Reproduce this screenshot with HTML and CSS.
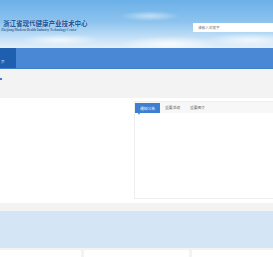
FILE: index.html
```html
<!DOCTYPE html>
<html lang="zh-CN">
<head>
  <meta charset="UTF-8">
  <meta name="viewport" content="width=device-width, initial-scale=1.0">
  <title>浙江省现代健康产业技术中心</title>
  <link rel="stylesheet" href="styles.css">
</head>
<body>
  <header class="header">
    <div class="brand">
      <h1>浙江省现代健康产业技术中心</h1>
      <p>Zhejiang Modern Health Industry Technology Center</p>
    </div>
    <div class="search">
      <input type="text" placeholder="请输入关键字">
    </div>
  </header>

  <nav class="nav">
    <a class="nav-home" href="#">页</a>
  </nav>

  <div class="notice-bar">
    <span class="notice-icon"></span>
  </div>

  <section class="main">
    <div class="main-left"></div>
    <div class="tabs-panel">
      <ul class="tabs">
        <li class="active">通知公告</li>
        <li>重要活动</li>
        <li>重要图文</li>
      </ul>
      <div class="tab-body"></div>
    </div>
  </section>

  <div class="band"></div>

  <div class="cards">
    <div class="card card-a"></div>
    <div class="card card-b"></div>
    <div class="card card-c"></div>
  </div>
</body>
</html>
```

FILE: styles.css
```css
* {
  box-sizing: border-box;
  margin: 0;
  padding: 0;
}

body {
  background: #f3f3f3;
  font-family: "Noto Sans CJK SC", "Noto Sans", sans-serif;
  overflow: hidden;
  width: 273px;
}

.header {
  height: 48px;
  display: flex;
  justify-content: space-between;
  align-items: flex-start;
  background:
    radial-gradient(ellipse 40px 6px at 60px 40px, rgba(255, 255, 255, 0.7), transparent),
    radial-gradient(ellipse 50px 8px at 170px 44px, rgba(255, 255, 255, 0.8), transparent),
    radial-gradient(ellipse 30px 5px at 150px 16px, rgba(255, 255, 255, 0.5), transparent),
    radial-gradient(ellipse 45px 7px at 250px 40px, rgba(255, 255, 255, 0.7), transparent),
    linear-gradient(#6cb0e8 0%, #8cc3ee 45%, #c6e1f6 80%, #e4f0fa 100%);
}

.brand {
  padding: 19px 0 0 3px;
}

.brand h1 {
  font-family: "Noto Sans CJK SC", sans-serif;
  font-size: 6.5px;
  font-weight: 900;
  line-height: 9px;
  color: #1d5aa2;
  text-shadow: 0 0 1px #fff;
}

.brand p {
  font-family: "Liberation Serif", serif;
  font-size: 3.3px;
  font-weight: 700;
  line-height: 5px;
  color: #3b6aa0;
  margin-left: -2px;
}

.search {
  padding-top: 23px;
}

.search input {
  display: block;
  width: 80px;
  height: 9px;
  border: 0;
  background: #fff;
  padding-left: 5px;
  font-size: 3.6px;
  font-family: "Noto Sans CJK SC", sans-serif;
  outline: none;
}

.search input::placeholder {
  color: #777;
}

.nav {
  height: 21px;
  background: #4a88d6;
  border-bottom: 1px solid #3f7cca;
  display: flex;
}

.nav-home {
  width: 16px;
  background: #1f5fb0;
  color: #d8e6f7;
  font-size: 3.5px;
  text-decoration: none;
  display: flex;
  align-items: flex-end;
  padding: 0 0 4px 1px;
}

.notice-bar {
  margin-top: 8px;
  height: 21px;
  background: #f3f3f3;
  padding-top: 1px;
}

.notice-icon {
  display: block;
  width: 2px;
  height: 2px;
  background: #3b7ad0;
}

.main {
  height: 105px;
  background: #fff;
  display: flex;
  padding-top: 3px;
}

.main-left {
  width: 134px;
}

.tabs-panel {
  flex: 1;
  height: 98px;
  border: 1px solid #eee;
  border-right: 0;
  display: flex;
  flex-direction: column;
}

.tabs {
  list-style: none;
  display: flex;
  height: 11px;
  background: #f7f7f7;
  font-size: 3.8px;
  color: #555;
}

.tabs li {
  width: 25px;
  display: flex;
  align-items: center;
  justify-content: center;
  position: relative;
}

.tabs .active {
  background: #3d80d2;
  color: #fff;
  margin-top: 1px;
}

.tabs .active::after {
  content: "";
  position: absolute;
  left: 3px;
  bottom: -2px;
  border-left: 1.5px solid transparent;
  border-right: 1.5px solid transparent;
  border-top: 2px solid #3d80d2;
}

.tab-body {
  flex: 1;
  background: #fff;
}

.band {
  margin-top: 8px;
  height: 37px;
  background: #d4e5f5;
}

.cards {
  margin-top: 2px;
  display: flex;
  gap: 3px;
  height: 10px;
}

.card {
  background: #fff;
}

.card-a {
  width: 81px;
}

.card-b {
  width: 105px;
}

.card-c {
  flex: 1;
}
```
